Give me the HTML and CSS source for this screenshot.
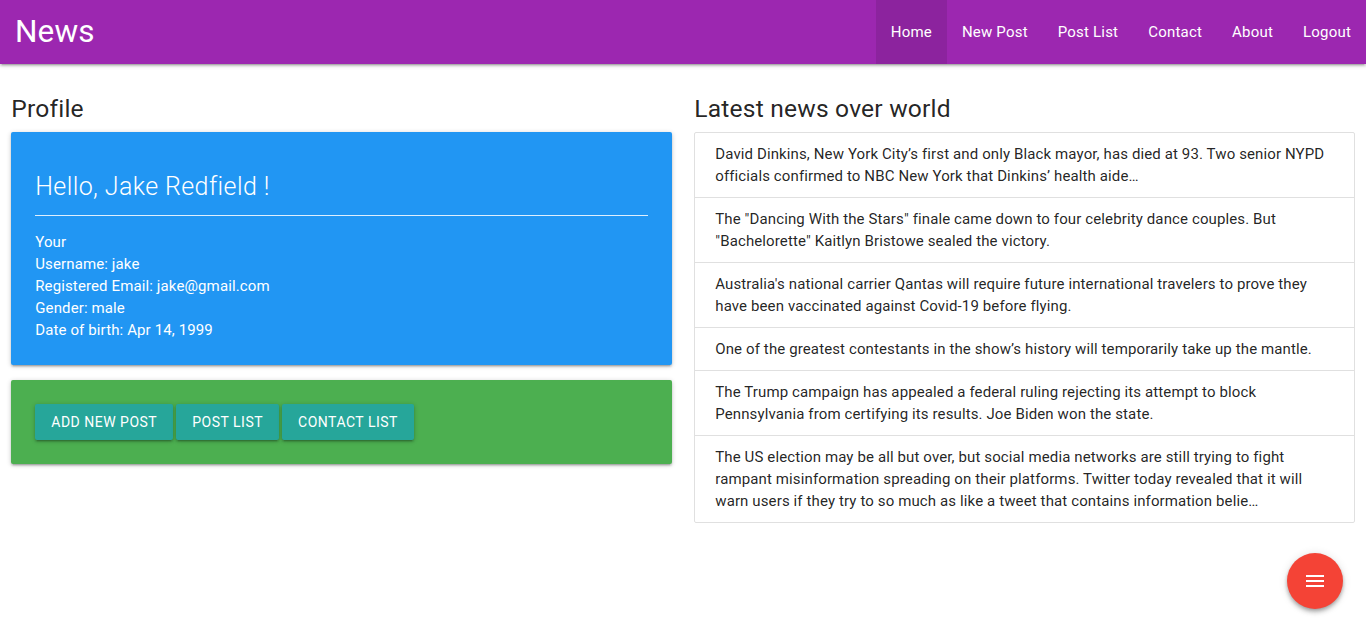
FILE: index.html
```html
<!DOCTYPE html>
<html lang="en">
<head>
<meta charset="utf-8">
<title>News</title>
<link rel="stylesheet" href="styles.css">
</head>
<body>
<nav class="navbar">
  <a class="brand" href="#">News</a>
  <ul class="nav-links">
    <li><a class="active" href="#">Home</a></li>
    <li><a href="#">New Post</a></li>
    <li><a href="#">Post List</a></li>
    <li><a href="#">Contact</a></li>
    <li><a href="#">About</a></li>
    <li><a href="#">Logout</a></li>
  </ul>
</nav>
<main class="row">
  <section class="col">
    <h5 class="heading">Profile</h5>
    <div class="card card-blue">
      <div class="card-title">Hello, Jake Redfield !</div>
      <hr class="divider">
      <div class="info">
        <div>Your</div>
        <div>Username: jake</div>
        <div>Registered Email: jake@gmail.com</div>
        <div>Gender: male</div>
        <div>Date of birth: Apr 14, 1999</div>
      </div>
    </div>
    <div class="card card-green">
      <div class="btn-row">
        <a class="btn" href="#">Add new post</a>
        <a class="btn" href="#">Post list</a>
        <a class="btn" href="#">Contact list</a>
      </div>
    </div>
  </section>
  <section class="col">
    <h5 class="heading">Latest news over world</h5>
    <ul class="collection">
      <li class="item">David Dinkins, New York City’s first and only Black mayor, has died at 93. Two senior NYPD officials confirmed to NBC New York that Dinkins’ health aide…</li>
      <li class="item">The "Dancing With the Stars" finale came down to four celebrity dance couples. But "Bachelorette" Kaitlyn Bristowe sealed the victory.</li>
      <li class="item">Australia's national carrier Qantas will require future international travelers to prove they have been vaccinated against Covid-19 before flying.</li>
      <li class="item">One of the greatest contestants in the show’s history will temporarily take up the mantle.</li>
      <li class="item">The Trump campaign has appealed a federal ruling rejecting its attempt to block Pennsylvania from certifying its results. Joe Biden won the state.</li>
      <li class="item">The US election may be all but over, but social media networks are still trying to fight rampant misinformation spreading on their platforms. Twitter today revealed that it will warn users if they try to so much as like a tweet that contains information belie…</li>
    </ul>
  </section>
</main>
<a class="fab" href="#" aria-label="menu">
  <svg width="24" height="24" viewBox="0 0 24 24"><path fill="#fff" d="M3 18h18v-2H3v2zm0-5h18v-2H3v2zm0-7v2h18V6H3z"/></svg>
</a>
</body>
</html>
```
FILE: styles.css
```css
* { box-sizing: border-box; }
html, body { margin: 0; padding: 0; }
body {
  font-family: Roboto, "Noto Sans", sans-serif;
  font-size: 15px;
  line-height: 22px;
  letter-spacing: 0.12px;
  color: rgba(0,0,0,0.87);
  background: #fff;
}
a { text-decoration: none; color: inherit; }

.navbar {
  height: 64px;
  background: #9c27b0;
  display: flex;
  align-items: center;
  justify-content: space-between;
  box-shadow: 0 2px 2px 0 rgba(0,0,0,.14), 0 3px 1px -2px rgba(0,0,0,.12), 0 1px 5px 0 rgba(0,0,0,.2);
  position: relative;
  z-index: 2;
}
.brand {
  color: #fff;
  font-size: 31.5px;
  padding-left: 15px;
  line-height: 64px;
}
.nav-links {
  list-style: none;
  margin: 0;
  padding: 0;
  display: flex;
  height: 64px;
}
.nav-links a {
  display: block;
  color: #fff;
  padding: 0 15px;
  line-height: 64px;
  font-size: 15px;
  letter-spacing: 0.2px;
}
.nav-links a.active { background: rgba(0,0,0,0.1); }

.row {
  display: grid;
  grid-template-columns: 1fr 1fr;
  padding-top: 15px;
}
.col { padding: 0 11.25px; min-width: 0; }

.heading {
  font-size: 24.6px;
  font-weight: 400;
  line-height: 27px;
  letter-spacing: 0.2px;
  margin: 16px 0 10px;
}

.card {
  border-radius: 2px;
  box-shadow: 0 2px 2px 0 rgba(0,0,0,.14), 0 3px 1px -2px rgba(0,0,0,.12), 0 1px 5px 0 rgba(0,0,0,.2);
  color: #fff;
  padding: 24px;
  margin-bottom: 15px;
}
.card-blue { background: #2196f3; }
.card-green { background: #4caf50; }

.card-title {
  font-size: 25px;
  font-weight: 300;
  line-height: 32px;
  letter-spacing: 0.4px;
  margin-top: 15px;
}
.divider {
  border: 0;
  border-top: 1px solid rgba(255,255,255,0.85);
  margin: 12px 0 15px;
}
.info { line-height: 22px; }

.btn-row { display: flex; gap: 3px; }
.btn {
  display: block;
  height: 36px;
  line-height: 36px;
  padding: 0 16px;
  background: #26a69a;
  color: #fff;
  text-transform: uppercase;
  font-size: 14px;
  letter-spacing: .5px;
  border-radius: 2px;
  box-shadow: 0 2px 2px 0 rgba(0,0,0,.14), 0 3px 1px -2px rgba(0,0,0,.12), 0 1px 5px 0 rgba(0,0,0,.2);
}

.collection {
  list-style: none;
  margin: 0;
  padding: 0;
  border: 1px solid #e0e0e0;
  border-radius: 2px;
}
.item {
  padding: 10px 20px;
  line-height: 22px;
  border-bottom: 1px solid #e0e0e0;
}
.item:last-child { border-bottom: 0; }

.fab {
  position: fixed;
  right: 23px;
  bottom: 23px;
  width: 56px;
  height: 56px;
  border-radius: 50%;
  background: #f44336;
  display: flex;
  align-items: center;
  justify-content: center;
  box-shadow: 0 4px 5px 0 rgba(0,0,0,.14), 0 1px 10px 0 rgba(0,0,0,.12), 0 2px 4px -1px rgba(0,0,0,.3);
}
```
